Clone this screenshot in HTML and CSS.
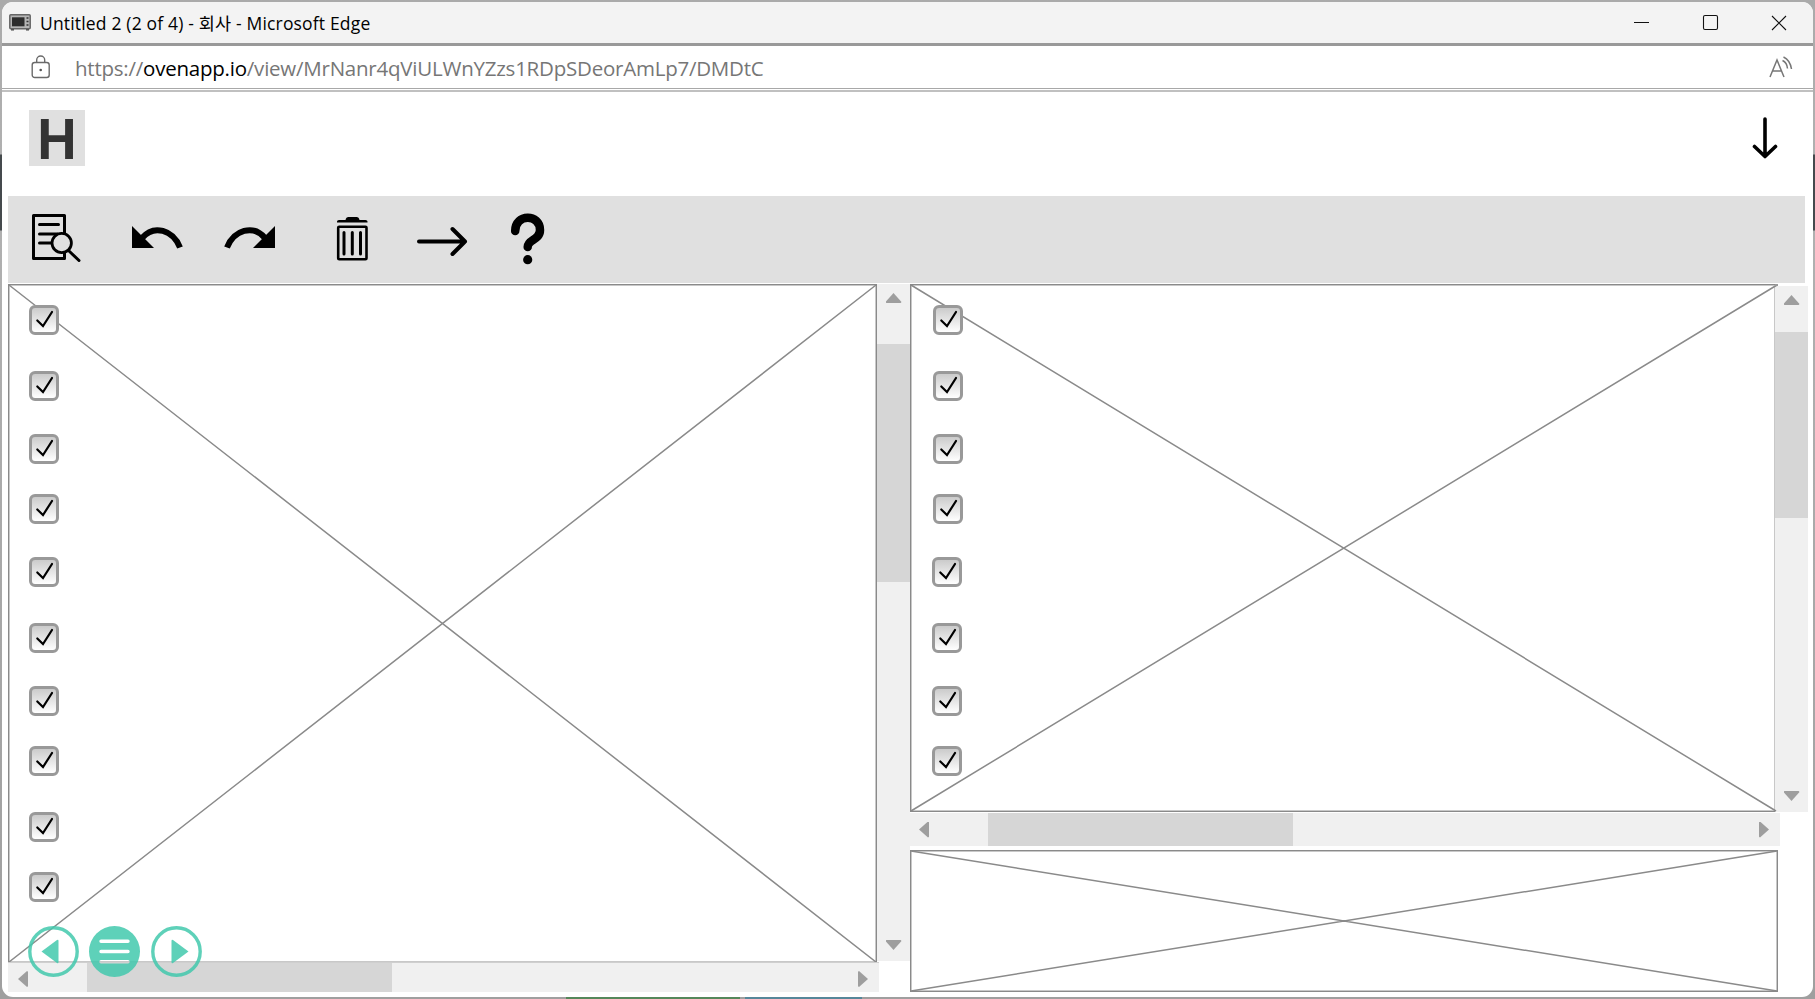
FILE: index.html
```html
<!DOCTYPE html>
<html lang="ko">
<head>
<meta charset="utf-8">
<title>Untitled 2 (2 of 4) - 회사 - Microsoft Edge</title>
<link rel="stylesheet" href="styles.css">
</head>
<body>
<svg width="0" height="0" class="defs">
  <symbol id="tick" viewBox="0 0 30 30"><path d="M8.300 15.500 14 21 23 7" fill="none" stroke="#000" stroke-width="2.200" stroke-linecap="round" stroke-linejoin="miter"/></symbol>
</svg>
<div class="window">
  <header class="titlebar">
    <svg class="app-icon" width="22" height="17" viewBox="0 0 22 17"><path d="M2 14h3v2.500H2zM17 14h3v2.500h-3z" fill="#444"/><rect x=".8" y=".8" width="20.400" height="13.900" rx="1" fill="#b5b5b5" stroke="#666" stroke-width="1.500"/><rect x="3" y="3.300" width="12.500" height="9" fill="#2d2d2d"/><path d="M17.500 4h2M17.500 7.500h2M17.500 11h2" stroke="#333" stroke-width="1.600"/></svg>
    <span class="title">Untitled 2 (2 of 4) - 회사 - Microsoft Edge</span>
    <svg class="controls" width="156" height="18" viewBox="0 0 156 18" fill="none" stroke="#111"><path d="M1 8.500h15"/><rect x="70.500" y="1.500" width="14" height="14" rx="1.500" stroke-width="1.100"/><path d="M139 2l14 14M153 2l-14 14" stroke-width="1.100"/></svg>
  </header>
  <div class="address">
    <svg class="lock" width="20" height="24" viewBox="0 0 20 24" fill="none" stroke="#6a6a6a" stroke-width="1.400"><rect x="1.200" y="7.500" width="17" height="15" rx="2.500"/><path d="M5.700 7.500V5a4 4 0 0 1 8 0v2.500"/><circle cx="9.700" cy="15" r="1.300" fill="#555" stroke="none"/></svg>
    <span class="url">https://<b>ovenapp.io</b>/view/MrNanr4qViULWnYZzs1RDpSDeorAmLp7/DMDtC</span>
    <svg class="read" width="24" height="22" viewBox="0 0 24 22" fill="none" stroke="#777" stroke-width="1.500"><path d="M1 21 8 4l7 17M3.500 15h9M13.500 4.500q4.500 2 5 8M14.500 1q6.500 3 8 12"/></svg>
  </div>
  <main class="page">
    <div class="brand">
      <div class="logo"><span>H</span></div>
      <svg class="down" width="26" height="44" viewBox="0 0 26 44" fill="none" stroke="#000" stroke-linecap="round" stroke-linejoin="round"><path d="M13 3V40.500M2.500 30.500 13 40.500l10.500-10" stroke-width="3.600"/></svg>
    </div>
    <div class="toolbar">
      <svg width="560" height="87" viewBox="0 0 560 87">
        <g fill="none" stroke="#000" stroke-width="3" stroke-linecap="round" stroke-linejoin="round">
          <path d="M56.500 52V62.500H25.500V19.500H56.500V38"/>
          <path d="M31.500 28.500h19M31.500 38h18M31.500 47h12"/>
          <circle cx="53.700" cy="47" r="9.700" fill="#e0e0e0" stroke-width="2.800"/>
          <path d="M60.500 54.500 71 64.500"/>
        </g>
        <g><path d="M124 30v22h22z"/><path d="M134 42C146 28 165 34 172 51.500" fill="none" stroke="#000" stroke-width="6"/></g>
        <g transform="translate(391 0) scale(-1 1)"><path d="M124 30v22h22z"/><path d="M134 42C146 28 165 34 172 51.500" fill="none" stroke="#000" stroke-width="6"/></g>
        <path d="M329 26.500v-1q0-1.500 2-1.500h6.500q.5-3 3-3h8q2.500 0 3 3h6q2 0 2 1.500v1z"/>
        <g fill="none" stroke="#000"><rect x="330.200" y="30.700" width="28.300" height="32.600" rx="1" stroke-width="2.600"/><path d="M336 36.500v21.500M344.300 36.500v21.500M352.500 36.500v21.500" stroke-width="3" stroke-linecap="round"/></g>
        <path d="M411 45.500h46M444.500 33 457 45.500 444.500 58" fill="none" stroke="#000" stroke-width="4" stroke-linecap="round" stroke-linejoin="round"/>
        <path d="M507.200 35C507.200 17.500 532 17.500 532 34C532 44.500 519.700 43 519.700 51" fill="none" stroke="#000" stroke-width="8.500" stroke-linecap="round"/><circle cx="519.700" cy="63.700" r="4.600"/>
      </svg>
    </div>
    <div class="panes">
      <section class="left">
        <div class="row">
          <div class="panel panel-main">
            <svg class="cross" width="869" height="678" viewBox="0 0 869 678"><path d="M1 1 868 678M868 1 1 678"/></svg>
            <ul class="checks">
              <li><svg><use href="#tick"/></svg></li><li class="far"><svg><use href="#tick"/></svg></li><li><svg><use href="#tick"/></svg></li><li class="near"><svg><use href="#tick"/></svg></li><li><svg><use href="#tick"/></svg></li><li class="far"><svg><use href="#tick"/></svg></li><li><svg><use href="#tick"/></svg></li><li class="near"><svg><use href="#tick"/></svg></li><li class="far"><svg><use href="#tick"/></svg></li><li class="near"><svg><use href="#tick"/></svg></li>
            </ul>
          </div>
          <div class="vbar"><i class="arrow up"></i><div class="vthumb"></div><i class="arrow dn"></i></div>
        </div>
        <div class="hbar hbar-left"><i class="arrow lf"></i><div class="hthumb"></div><i class="arrow rt"></i></div>
      </section>
      <section class="right">
        <div class="row">
          <div class="panel panel-side">
            <svg class="cross" width="868" height="528" viewBox="0 0 868 528"><path d="M1 1 866 527M867 1 1 527"/></svg>
            <ul class="checks">
              <li><svg><use href="#tick"/></svg></li><li class="far"><svg><use href="#tick"/></svg></li><li><svg><use href="#tick"/></svg></li><li class="near"><svg><use href="#tick"/></svg></li><li class="shift"><svg><use href="#tick"/></svg></li><li class="far shift"><svg><use href="#tick"/></svg></li><li class="shift"><svg><use href="#tick"/></svg></li><li class="near shift"><svg><use href="#tick"/></svg></li>
            </ul>
          </div>
          <div class="vbar vbar-right"><i class="arrow up"></i><div class="vthumb"></div><i class="arrow dn"></i></div>
        </div>
        <div class="hbar"><i class="arrow lf"></i><div class="hthumb"></div><i class="arrow rt"></i></div>
        <div class="panel panel-note">
          <svg class="cross" width="868" height="142" viewBox="0 0 868 142"><path d="M1 1 867 141M867 1 1 141"/></svg>
        </div>
      </section>
    </div>
    <nav class="pager">
      <svg width="51" height="51" viewBox="0 0 51 51"><circle cx="25.500" cy="25.500" r="23.700" class="ring"/><path d="M13.500 25.500 29 14q1.500-1 1.500 1v21q0 2-1.500 1z"/></svg>
      <svg width="51" height="51" viewBox="0 0 51 51"><path fill-rule="evenodd" d="M25.500 0a25.500 25.500 0 1 0 0 51 25.500 25.500 0 0 0 0-51zM12 13.500h27q1.700 0 1.700 1.700T39 17H12q-1.700 0-1.700-1.700T12 13.500zM12 23.700h27q1.700 0 1.700 1.700T39 27.200H12q-1.700 0-1.700-1.700T12 23.700zM12 34h27q1.700 0 1.700 1.700T39 37.500H12q-1.700 0-1.700-1.700T12 34z"/></svg>
      <svg width="51" height="51" viewBox="0 0 51 51"><circle cx="25.500" cy="25.500" r="23.700" class="ring"/><path d="M37.500 25.500 22 14q-1.500-1-1.500 1v21q0 2 1.500 1z"/></svg>
    </nav>
  </main>
</div>
<div class="desktop-strip"><span class="green"></span><span class="blue"></span></div>
</body>
</html>
```
FILE: styles.css
```css
* { box-sizing: border-box; }
body {
  margin: 0;
  width: 1815px;
  height: 999px;
  overflow: hidden;
  padding: 2px 2px 0;
  background: linear-gradient(#aaa 0, #b0b0b0 154px, #454a4d 155px, #454a4d 230px, #b0b0b0 231px, #9f9f9f 999px);
}
svg { display: block; flex: none; }
.defs { position: absolute; }
.window {
  width: 1811px;
  height: 995px;
  border-radius: 11px;
  overflow: hidden;
  background: #fff;
  font-family: "Open Sans", "Noto Sans CJK KR", sans-serif;
}
.titlebar {
  display: flex;
  align-items: center;
  height: 44px;
  padding: 0 24px 0 7px;
  background: #f3f3f3;
  border-bottom: 3px solid #999;
}
.title {
  margin-left: 9px;
  font-size: 17.500px;
  letter-spacing: 0.170px;
  white-space: nowrap;
  color: #000;
}
.controls { margin-left: auto; }
.address {
  display: flex;
  align-items: center;
  height: 46px;
  padding: 0 20px 4px 29px;
  background: linear-gradient(#fff 42px, #a8a8a8 42px, #a8a8a8 43px, #fff 43px, #fff 44px, #c0c0c0 44px);
}
.url {
  margin: 1px 0 0 24px;
  font-size: 20.500px;
  letter-spacing: -0.230px;
  white-space: nowrap;
  color: #767676;
}
.url b { font-weight: 400; color: #000; }
.read { margin-left: auto; }
.page { position: relative; padding: 0 0 0 6px; }
.brand {
  display: flex;
  justify-content: space-between;
  height: 104px;
  padding: 18px 35px 0 21px;
}
.logo {
  width: 56px;
  height: 56px;
  background: #e0e0e0;
  color: #333;
  font: bold 58px/58px "Liberation Sans", sans-serif;
  text-align: center;
}
.logo span { display: block; transform: scaleX(0.940); }
.down { margin-top: 6px; }
.toolbar { width: 1797px; height: 87px; background: #e0e0e0; }
.panes { display: flex; margin-top: 1px; }
.left { width: 902px; }
.right { width: 898px; }
.row { display: flex; }
.panel { position: relative; flex: none; border: 1px solid #8a8a8a; box-shadow: inset 0 0 0 1px #c8c8c8; }
.panel-main { width: 869px; height: 678px; border-bottom: 0; }
.panel-side { width: 865px; height: 528px; border-right: 0; }
/* the frame's top edge continues above the scrollbar */
.panel-side::after {
  content: "";
  position: absolute;
  left: 864px;
  top: -1px;
  width: 3px;
  height: 2px;
  background: #999;
}
.panel-note { width: 868px; height: 142px; margin-top: 4px; }
.cross {
  position: absolute;
  left: -1px;
  top: -1px;
  fill: none;
  stroke: #8a8a8a;
  stroke-width: 1.500;
}
.checks {
  position: relative;
  display: flex;
  flex-direction: column;
  margin: 0;
  padding: 20px 0 0 20px;
  list-style: none;
}
.panel-side .checks { padding-left: 22px; }
.checks li {
  width: 30px;
  height: 30px;
  margin-top: 33px;
  border: 3px solid #999;
  border-radius: 6px;
  background: linear-gradient(#cbcbcb, #fff);
}
.checks li:first-child { margin-top: 0; }
.checks .far { margin-top: 36px; }
.checks .near { margin-top: 30px; }
.checks .shift { margin-left: -1px; }
.checks svg { width: 30px; height: 30px; margin: -3px; }
.vbar {
  display: flex;
  flex-direction: column;
  align-items: center;
  flex: none;
  width: 33px;
  height: 677px;
  padding: 9px 0 11px;
  background: #f0f0f0;
}
.vthumb { width: 33px; height: 238px; margin: 41px 0 auto; background: #d6d6d6; }
.vbar-right { height: 526px; margin-top: 2px; }
.vbar-right .vthumb { height: 186px; margin-top: 27px; }
.hbar {
  display: flex;
  align-items: center;
  width: 870px;
  height: 33px;
  margin-top: 1px;
  padding: 0 11px 0 9px;
  background: #f0f0f0;
}
.hthumb { width: 305px; height: 33px; margin: 0 auto 0 59px; background: #d6d6d6; }
.hbar-left { width: 871px; height: 30px; margin-top: 0; padding: 3px 11px 0 10px; border-top: 1px solid #cfcfcf; }
.hbar-left .hthumb { height: 29px; margin-top: -3px; }
.arrow { flex: none; background: #9e9e9e; }
.up, .dn { width: 16px; height: 10px; }
.lf, .rt { width: 10px; height: 16px; }
.up { clip-path: polygon(50% 0, 100% 90%, 95% 100%, 5% 100%, 0 90%); }
.dn { clip-path: polygon(50% 100%, 100% 10%, 95% 0, 5% 0, 0 10%); }
.lf { clip-path: polygon(0 50%, 90% 0, 100% 5%, 100% 95%, 90% 100%); }
.rt { clip-path: polygon(100% 50%, 10% 0, 0 5%, 0 95%, 10% 100%); }
.pager {
  position: absolute;
  left: 26px;
  top: 833.500px;
  display: flex;
  gap: 10.300px;
  opacity: 0.85;
  fill: #43c9ad;
}
.pager .ring { fill: none; stroke: #43c9ad; stroke-width: 3.400; }
.desktop-strip { display: flex; gap: 5px; height: 2px; padding-left: 564px; }
.green { width: 174px; background: #55875a; }
.blue { width: 117px; background: #56879a; }
```
